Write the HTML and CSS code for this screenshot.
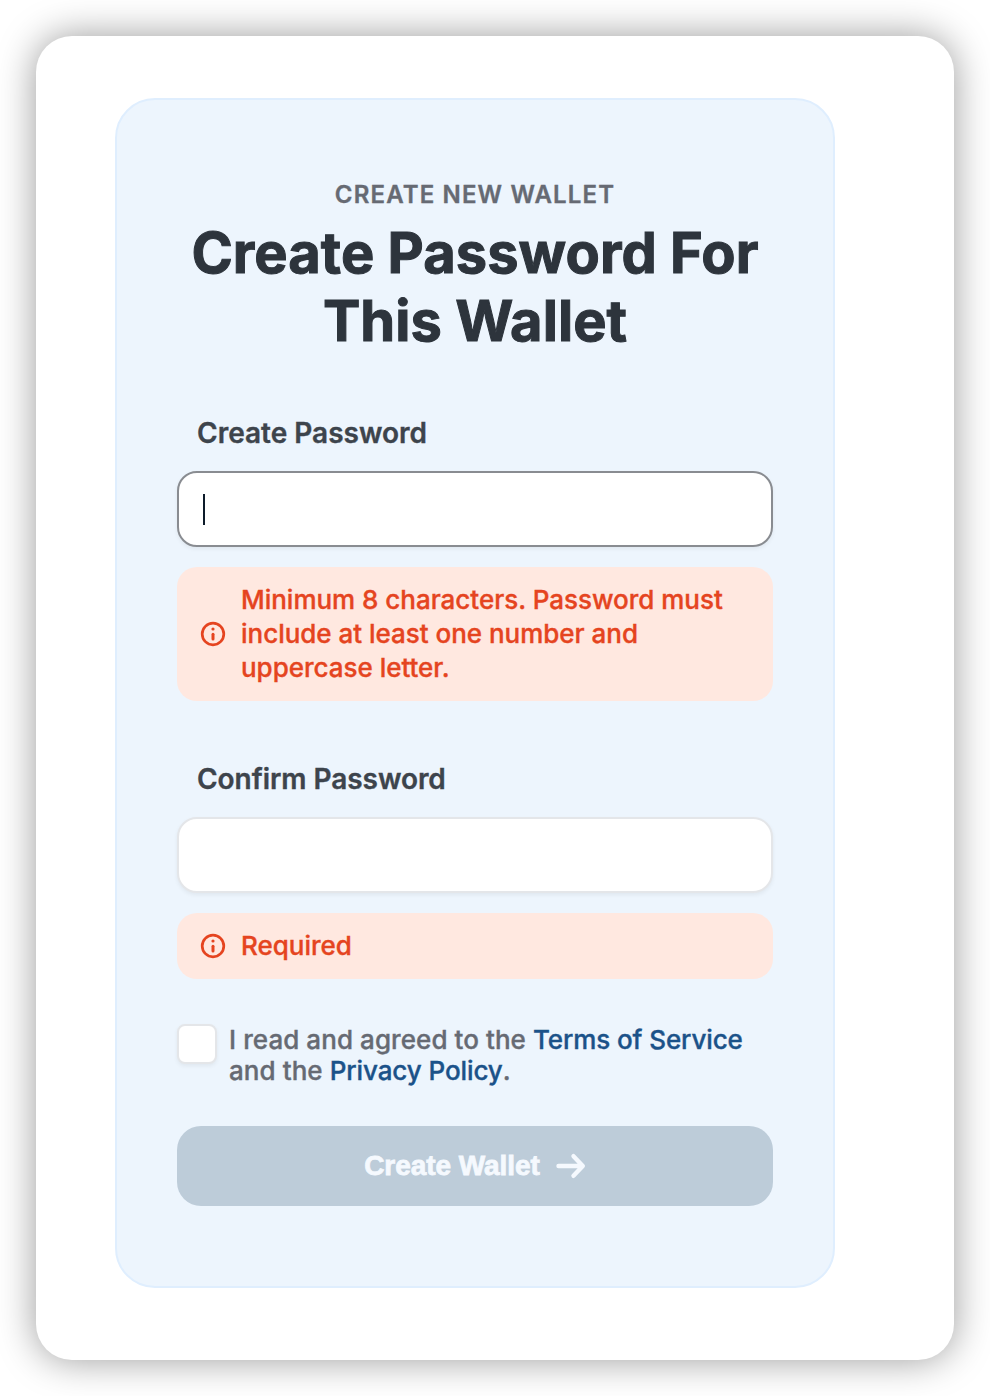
FILE: index.html
```html
<!DOCTYPE html>
<html lang="en">
<head>
<meta charset="utf-8">
<title>Create New Wallet</title>
<link rel="stylesheet" href="styles.css">
</head>
<body>
<main class="window">
  <form class="card">
    <p class="eyebrow">CREATE NEW WALLET</p>
    <h1 class="title">Create Password For<br>This Wallet</h1>
    <div class="field">
      <label class="label">Create Password</label>
      <div class="input input-focus"><span class="caret"></span></div>
      <div class="alert">
        <svg class="info" viewBox="0 0 26 26" fill="none" stroke="currentColor"><circle cx="13" cy="13" r="10.8" stroke-width="2.7"/><path d="M13 13.2v4.8" stroke-width="3" stroke-linecap="round"/><circle cx="13" cy="8" r="1.6" fill="currentColor" stroke="none"/></svg>
        <span>Minimum 8 characters. Password must<br>include at least one number and<br>uppercase letter.</span>
      </div>
    </div>
    <div class="field field-confirm">
      <label class="label label-confirm">Confirm Password</label>
      <div class="input"></div>
      <div class="alert">
        <svg class="info" viewBox="0 0 26 26" fill="none" stroke="currentColor"><circle cx="13" cy="13" r="10.8" stroke-width="2.7"/><path d="M13 13.2v4.8" stroke-width="3" stroke-linecap="round"/><circle cx="13" cy="8" r="1.6" fill="currentColor" stroke="none"/></svg>
        <span>Required</span>
      </div>
    </div>
    <div class="terms">
      <span class="checkbox"></span>
      <p class="agreement">I read and agreed to the <a class="link">Terms of Service</a><br>and the <a class="link">Privacy Policy</a>.</p>
    </div>
    <button class="submit" type="button" disabled><span class="submit-text">Create Wallet</span>
      <svg class="arrow" viewBox="0 0 30 26" fill="none" stroke="currentColor" stroke-width="4.4" stroke-linecap="round" stroke-linejoin="round"><path d="M2.5 13h24M17.5 3.2l9.3 9.8-9.3 9.8"/></svg>
    </button>
  </form>
</main>
</body>
</html>
```
FILE: styles.css
```css
* { box-sizing: border-box; }
body { margin: 0; padding: 36px; height: 1396px; background: #fff; font-family: Inter, sans-serif; overflow: hidden; }
.window { width: 918px; height: 1324px; padding: 62px 0 0 79px; border-radius: 36px; background: #fff; box-shadow: 0 0 38px rgba(0,0,0,.4); }
.card { width: 720px; height: 1190px; padding: 79px 60px 0; border: 2px solid #dfeefe; border-radius: 40px; background: #edf5fd; -webkit-text-stroke: .35px currentColor; }
.eyebrow { margin: 0; height: 32px; line-height: 32px; font-size: 24px; font-weight: 600; letter-spacing: 1.15px; text-align: center; color: #666a73; }
.title { margin: 8px 0 0; line-height: 68px; font-size: 56px; font-weight: 700; text-align: center; color: #2d343c; letter-spacing: .05px; white-space: nowrap; -webkit-text-stroke: 1px currentColor; }
.field { margin-top: 62px; }
.label { display: block; height: 32px; line-height: 32px; padding-left: 20px; font-size: 28px; font-weight: 600; color: #3d444c; }
.label-confirm { letter-spacing: -.05px; }
.input { display: flex; align-items: center; height: 76px; margin-top: 22px; padding-left: 24px; border: 2px solid #e4e6e9; border-radius: 20px; background: #fff; box-shadow: 0 2px 4px rgba(0,0,0,.06); }
.input-focus { border-color: #898c91; }
.caret { width: 2px; height: 31px; background: #0d1b2a; }
.alert { display: flex; align-items: center; gap: 15px; margin-top: 20px; padding: 16px 23px; border-radius: 20px; background: #ffe8e0; color: #e54420; font-size: 26px; font-weight: 500; line-height: 34px; white-space: nowrap; letter-spacing: -.02px; }
.info { width: 26px; height: 26px; flex: none; }
.terms { display: flex; gap: 12px; margin-top: 45px; }
.checkbox { width: 40px; height: 40px; border: 2px solid #e4e6e9; border-radius: 8px; background: #fff; box-shadow: 0 2px 4px rgba(0,0,0,.06); }
.agreement { margin: 0; font-size: 26px; font-weight: 500; line-height: 31px; color: #666a73; white-space: nowrap; letter-spacing: .07px; }
.link { color: #1b5289; letter-spacing: -.1px; }
.submit { display: flex; align-items: center; justify-content: center; gap: 16px; width: 100%; height: 80px; margin-top: 40px; padding: 0 6px; border: 0; border-radius: 24px; background: #bdccd9; color: #f5f9fe; font: 700 28px "Liberation Sans", Arial, sans-serif; -webkit-text-stroke: .8px currentColor; }
.submit-text { letter-spacing: -.05px; }
.arrow { width: 30px; height: 26px; }
```
